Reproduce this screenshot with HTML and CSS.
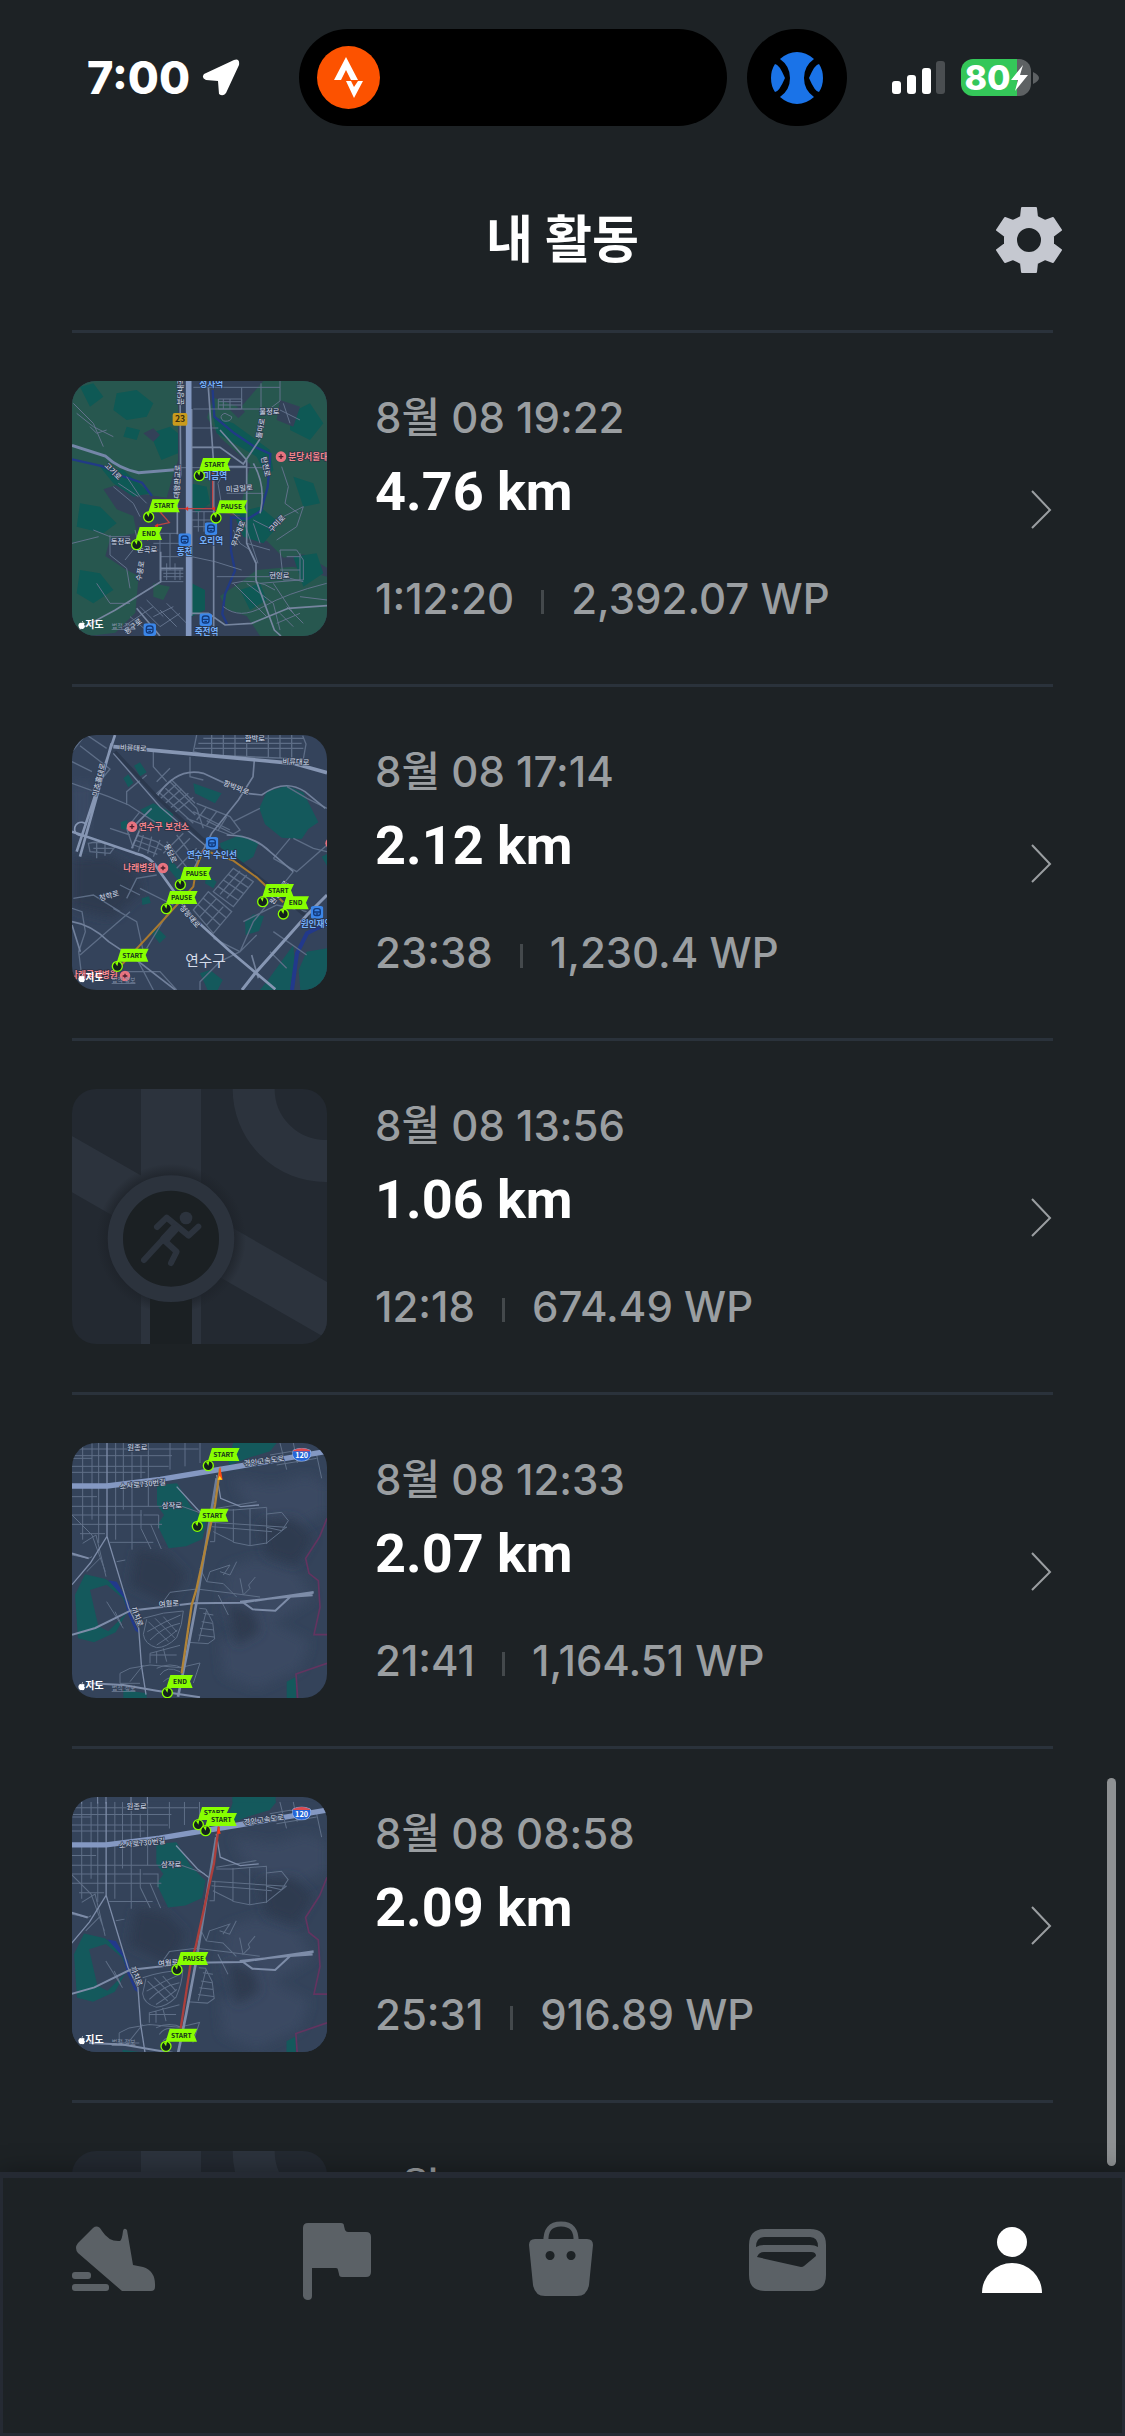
FILE: index.html
```html
<!DOCTYPE html>
<html lang="ko">
<head>
    <meta charset="utf-8">
    <meta name="viewport" content="width=device-width, initial-scale=1">
    <title>내 활동</title>
    <link rel="stylesheet" href="styles.css">
</head>
<body>

<!-- shared drawings -->
<svg class="defs" aria-hidden="true">
    <defs>
        <radialGradient id="ringShadow" gradientUnits="userSpaceOnUse" cx="333" cy="476" r="225">
            <stop offset="0.8" stop-color="#1e232a"/>
            <stop offset="1" stop-color="#1e232a" stop-opacity="0"/>
        </radialGradient>
        <filter id="relief"><feGaussianBlur stdDeviation="16"/></filter>
        <symbol id="pinWide" viewBox="-20 -60 120 80" overflow="visible">
            <path d="M11-53h83l-9 19 8 20H7l-4 8-6-2z" fill="#8f0"/>
            <circle r="15" fill="#14221c" stroke="#8f0" stroke-width="4"/>
            <path d="M0 0L-7-11A13 13 0 0 1 3-13z" fill="#8f0"/>
        </symbol>
        <symbol id="pinNarrow" viewBox="-20 -60 120 80" overflow="visible">
            <path d="M9-53h68l-9 19 8 20H5l-4 8-6-2z" fill="#8f0"/>
            <circle r="15" fill="#14221c" stroke="#8f0" stroke-width="4"/>
            <path d="M0 0L-7-11A13 13 0 0 1 3-13z" fill="#8f0"/>
        </symbol>
        <symbol id="station" viewBox="0 0 38 38">
            <rect width="38" height="38" rx="8" fill="#3b86e8"/>
            <rect x="9" y="8" width="20" height="21" rx="7" fill="none" stroke="#123a7c" stroke-width="4"/>
            <path d="M10 18h18M15 24h8" stroke="#123a7c" stroke-width="4"/>
        </symbol>
        <symbol id="hospital" viewBox="0 0 34 34">
            <circle cx="17" cy="17" r="16" fill="#e8737f"/>
            <path d="M17 10v14M10 17h14" stroke="#4b1e2c" stroke-width="4"/>
        </symbol>
        <symbol id="apple" viewBox="0 0 22 26">
            <path d="M11 7Q16 4 20 8Q16 13 21 17Q18 26 14 25Q11 23 8 25Q1 22 1 14Q2 4 11 7zM11 6Q11 1 15 0Q15 5 11 6z" fill="#fff"/>
        </symbol>
        <symbol id="shield120" viewBox="0 0 56 42">
            <path d="M2 8Q28-4 54 8Q60 26 46 36Q28 46 10 36Q-4 26 2 8z" fill="#2566d8" stroke="#b9cdf2" stroke-width="2"/>
            <path d="M3 8Q28-4 53 8v3H3z" fill="#dc4a4f"/>
            <text x="28" y="32" class="shield">120</text>
        </symbol>
        <symbol id="noMap" viewBox="36 27 765 765">
            <rect x="36" y="27" width="765" height="765" fill="#232931"/>
            <path d="M243 27h180v765H243zM36 168l765 438v170L36 337z" fill="#2c333d"/>
            <circle cx="797" cy="27" r="216" fill="none" stroke="#2c333d" stroke-width="126"/>
            <circle cx="333" cy="476" r="225" fill="url(#ringShadow)"/>
            <path d="M270 640h126v152H270z" fill="#1b2023"/>
            <circle cx="333" cy="476" r="167" fill="#1b2023" stroke="#2c333d" stroke-width="46"/>
            <g fill="none" stroke="#2c333d" stroke-width="18" stroke-linecap="round" stroke-linejoin="round">
                <path d="M291 441l29-28 66 54 29-27"/>
                <path d="M343 441l-91 99M340 446l-22 40 32 29-17 34"/>
                <path d="M344 446l-30 32" stroke-width="28"/>
            </g>
            <circle cx="378" cy="414" r="19" fill="#2c333d"/>
        </symbol>
        <!-- the same district is shown by two activities -->
        <symbol id="district" viewBox="36 24 765 765">
            <rect x="36" y="24" width="765" height="765" fill="#34435a"/>
            <g fill="#3b4a62" filter="url(#relief)">
                <path d="M520 130l120 20 100-30 61 30v80l-120 60-130-90z"/>
                <path d="M500 400l90-30 120 40 50 80-180 110-100-60z"/>
                <path d="M480 620l150-60 120 60-30 80-130 60-100-40z"/>
            </g>
            <g fill="#2e3b50" filter="url(#relief)">
                <path d="M230 340l90 20 60 60-50 90-120-60z"/>
                <path d="M600 260l100-10 60 60-50 80-90-30z"/>
                <path d="M500 500l80 30 20 60-70 40z"/>
            </g>
            <g fill="#14595c">
                <path d="M291 150l60-5 42 70 45 45-10 52-50 22-52 6-34-70 20-30-21-30z"/>
                <path d="M45 480l30-62 62 14 40 30 30 60-40 70-65 30-48-12z"/>
                <path d="M520 24h130l-20 25-60 18-62 24-4-20z"/>
                <path d="M680 740l28-15v64h-28zM190 765l70 10v14h-70z"/>
            </g>
            <path d="M90 465l50-16 48 40 17 40-60 60-30-15z" fill="#34435a"/>
            <path d="M145 436l25 4 36 60 10 45 22 50-12-8-22-50-12-48z" fill="#22398b"/>
            <g fill="none" stroke="#5f6f87" stroke-width="3">
                <path d="M68 24v290M96 24v230M116 24v300M167 24v290M190 24v200M216 24v320M243 60v70M265 24v190M330 24v80M375 24v70M420 24v60"/>
                <path d="M36 42h380M36 62h300M36 94h290M36 112h220M36 185h75M36 214h330l70 25M36 240h210M36 268h270M60 296h75M150 322h130M36 70h60"/>
                <path d="M243 225v55l30 62M272 268l32 74M250 240h46v40M68 325l40-25 30 125M80 410l40-40M36 240l60 60 40 110"/>
                <path d="M470 220l120-20M470 225h50l100-8v60l45 10 20-30-20-25-45 5M520 222v100l50 10 50-8 60-48M570 222v108M456 262l225 15M456 275l180 15M460 290l60 30M620 277v50M450 320h14l2-60"/>
                <path d="M310 500l20-28 80-10 100 12 90 12M420 400l20 40 50 6 40 40M440 440l10-30 60-20-20 30M480 410l30 10 20-40M540 430l10 50 20-20-4-10 20-24M475 480l30 60"/>
                <path d="M250 550q60-20 120-22-2 40-20 80-30 30-60 30-36-10-40-40l10-45M265 560l60 60M285 550l60 60M310 545l40 45M262 590q50-30 100-50M270 615q40-40 90-50M290 630q40-25 62-45"/>
                <path d="M418 520l20 2 20 40 6 50-20 14-60-4M430 535l30 5M425 560l32 5M420 580l42 5M416 600l46 6M440 524l-24 95"/>
                <path d="M270 685v-30l90-24M270 660h80M290 650v35M310 640l10 40M180 715l30-15 60-10 90 8 60-14-20 60M290 700q40-20 80 0M300 720q20-30 60-10M310 740q20-20 50-10M180 715v30h60M250 690l-40 50"/>
                <path d="M36 360l50 10 10-5M140 500l50 80M165 530l20 40M170 380l26-5M630 60l60-10 80 10 15 70M650 90l120-20M660 24l20 80M700 24l12 60"/>
            </g>
            <g fill="none" stroke="#7d8ca8" stroke-width="6">
                <path d="M141 24v280l-50 80-55 65M141 304l65 215 30 60 8 110 14 90M350 155l64 70 40 30M470 120l12 70 60 25 55-5" stroke-width="4"/>
                <path d="M36 599l70-20 105-52 190-22 145-2 215-32M550 503l28 20 68 4 45-42 70-12M36 355l50 15M540 500l140-14 78-5"/>
                <path d="M410 500l-30 160-26 125" stroke-width="8"/>
                <path d="M90 745l100 5 100 17 130 20"/>
            </g>
            <path d="M36 153h105l160-20 240-40 260-44" fill="none" stroke="#8498c2" stroke-width="16"/>
            <path d="M470 130L410 500" stroke="#6f7e98" stroke-width="8"/>
            <path d="M801 250l-22 55-42 65 10 45 28 22 5 80-18 82h39M801 685l-93 32 5 72" fill="none" stroke="#633460" stroke-width="5"/>
            <g class="road">
                <text x="202" y="46">원종로</text>
                <text x="305" y="220">삼작로</text>
                <text x="297" y="516" transform="rotate(-4 297 516)">여월로</text>
                <text x="180" y="163" transform="rotate(-6 180 163)">소사로730번길</text>
                <text x="553" y="94" transform="rotate(-8 553 94)">경인고속도로</text>
                <text x="213" y="520" transform="rotate(68 213 520)">까치로</text>
            </g>
            <use href="#shield120" x="697" y="38" width="56" height="42"/>
        </symbol>
    </defs>
</svg>

<div class="status-bar">
    <div class="clock">
        <span>7:00</span>
        <svg width="38" height="38" viewBox="0 0 38 38"><path d="M32 1Q38-1 37 6L24 34Q21 38 17 35L16 22L4 21Q-1 19 2 15z" fill="#fff"/></svg>
    </div>
    <div class="island">
        <svg width="63" height="63" viewBox="0 0 63 63">
            <circle cx="31.500" cy="31.500" r="31.500" fill="#fc5200"/>
            <path d="M17 34L29 11L41 34H34L29 24L24 34z" fill="#fff"/>
            <path d="M29 35H34L37 41L41 35H46L37 52z" fill="#fff"/>
        </svg>
    </div>
    <div class="island-dot">
        <svg width="54" height="54" viewBox="0 0 54 54">
            <path d="M10 8Q18 1 27 1T44 8Q34 15 34 27T44 46Q36 53 27 53T10 46Q20 39 20 27T10 8z" fill="#1a73e8"/>
            <path d="M5 13Q1 19 1 27T5 41Q9 41 15 27Q9 13 5 13zM49 13Q53 19 53 27T49 41Q45 41 39 27Q45 13 49 13z" fill="#1a73e8"/>
        </svg>
    </div>
    <div class="status-right">
        <svg width="54" height="34" viewBox="0 0 54 34">
            <rect x="0" y="20" width="9" height="13" rx="3" fill="#fff"/>
            <rect x="15" y="14" width="9" height="19" rx="3" fill="#fff"/>
            <rect x="30" y="7" width="9" height="26" rx="3" fill="#fff"/>
            <rect x="44" y="0" width="9" height="33" rx="3" fill="#4a4e51"/>
        </svg>
        <div class="battery">
            <span>80</span>
            <svg width="17" height="26" viewBox="0 0 17 26"><path d="M12 0L0 15H7L4 26L17 10H9z" fill="#fff"/></svg>
        </div>
        <svg class="battery-tip" width="6" height="12" viewBox="0 0 6 12"><path d="M0 0Q6 3 6 6T0 12z" fill="#5d6163"/></svg>
    </div>
</div>

<header class="title-bar">
    <h1>내 활동</h1>
    <button class="settings" type="button" aria-label="설정">
        <svg width="68" height="68" viewBox="-1 -1 68 68">
            <path fill="#c5c8d0" stroke="#c5c8d0" stroke-width="2" stroke-linejoin="round" fill-rule="evenodd" d="M26 1H40L41 10L49 14L57 11L65 23L57 29V37L65 43L57 55L49 52L41 56L40 65H26L25 56L17 52L9 55L1 43L9 37V29L1 23L9 11L17 14L25 10zM33 20a13 13 0 1 0 0 26a13 13 0 1 0 0-26z"/>
        </svg>
    </button>
</header>

<main class="activities">
    <a class="activity" href="#">
        <svg class="thumb" viewBox="36 33 765 765">
            <rect x="36" y="33" width="765" height="765" fill="#334158"/>
            <g fill="#27574f">
                <path d="M36 33h318v240l-14 40-20 70-70-10-60-35-60 20 40 60 50 20 10 50-80 20-14 50 60 40 40 20-10 110-60 60-80 10H36z"/>
                <path d="M610 33h191v560l-70-40-60 10-50-50-60-10-30-60 20-70 20-90-90-80-40-60 20-60 80 30z"/>
                <path d="M590 600l110-10 101 30v178H600l-40-60-60-20-20-40 60-40z"/>
                <path d="M400 300l50 10v100h-50zM280 640l50 10-20 40-30-10z"/>
            </g>
            <g fill="#0e5955">
                <path d="M170 70l60-10 50 40-20 40-60 10-40-30zM60 50l40-10 30 40-40 30zM60 400l60 10 50 50-40 30-80-20zM460 140l60 20 110 80 10 60-20 20-30-60-120-70z"/>
                <path d="M60 600l60 10 40 50-60 40-50-30zM690 130l60-30 40 60-40 50-60-30zM700 560l70-10 20 60-60 40zM395 640l40 20v60l-40 20zM390 340l50 10 10 50-40 30-20-30zM120 290l70 10 80 70-50 10-60-40z"/>
                <path d="M520 430l80-20 60 50-50 60-60-20zM540 660l60-20 20 50-50 30zM270 190l60-20 24 20v60l-50 20zM200 170l40 10-10 30-40-10zM700 320l60 20 20 60-50 10z"/>
            </g>
            <path d="M250 190l30-15 20 20-20 20zM510 120l30-10 15 15-20 20zM660 90l60 20-20 60-50-20z" fill="#334158"/>
            <path d="M458 60l5 80 60 50 60 40 48 22-8 100-20 70-40 25-50-5v100l12 60-30 70-8 60 14 30M36 268l90 20 60 30 60 20 30 40" fill="none" stroke="#213a86" stroke-width="7"/>
            <g fill="none" stroke="#62728b" stroke-width="3">
                <path d="M400 52h260M400 117h200M395 174h80M475 87h70v30h-70zM490 87v30M510 87v30M545 52v65M603 40v75M660 33v60l-40 30M475 95h70M475 105h70"/>
                <path d="M395 232h60M360 293h250M395 425h70M395 450h70M400 470h50M500 370h110M415 425v60M432 425v60M395 560l70 15 80 25M470 620h200l60 15M600 640l120-10v-80"/>
                <path d="M40 100l60 60 30 70M50 130l50 40 60 30M90 170l20 20 30-10M150 495v60l50 40 10 60M245 480v60M300 490v140M330 490v110M245 490h110M280 520h80M300 560h65M245 540h50M300 600h70M310 620h60M320 580v50M345 580v50M360 600v30M310 610h60M300 635h70"/>
                <path d="M160 350l60 50 20 40M175 340l60 40M200 320l40 60 20 20M225 480l10 40-40 50M100 480l50 20h60M36 520l80-20"/>
                <path d="M520 480l20 40 30 20 20 40M560 520l70 20M580 450l60 30 30-40 60-30-20 60-60 40M665 290l20 60-10 50 40 30M600 520l-20-60M660 540h50l20 30v60h-60zM680 560h40M660 600h60"/>
                <path d="M240 710l60 60 60-40M260 690l50 50M300 720l50 50M280 740l60-30M320 700l60 60M210 740l60 50M190 770l90-60M560 640l80 60 20 80M640 640l60 90M520 640l100 100M660 730l40 40M680 710l50 50M650 760l70-30M660 120l60 30M670 100l20 60"/>
                <path d="M110 640l40 60h60M720 680l81 10M490 710q50 40 120 0t190-70M515 640q70-20 130 20M494 300l-20 40 10 60 70 60 40 120M495 130a16 12 0 1 0 20 10z"/>
            </g>
            <g fill="none" stroke="#76859f" stroke-width="5">
                <path d="M445 52l16 230v516M360 33l2 280-10 60v120M395 117v620M480 180l80 90v250l28 60v50l55 150 20 18M395 232h85l70 50 50-75M560 290h-70M36 790l130-70 136-85v-90M395 730h50l50 35 80-5 110-45 116-8M300 595h70M600 430q20-80-20-150M230 715l70 83"/>
            </g>
            <path d="M36 226l100 32q40 38 100 50l126-10" fill="none" stroke="#7486a8" stroke-width="9"/>
            <path d="M386 33v765" stroke="#8297bf" stroke-width="17"/>
            <path d="M458 300v116H355l-55 10 28 32-38 8-28 45" fill="none" stroke="#b94444" stroke-width="4"/>
            <path d="M374 416l10-6v12zM455 416l10-6v12zM284 467l10-6v12zM460 420l80 18" fill="#f32c1e" stroke="#b94444"/>
            <use href="#station" x="434" y="457" width="38" height="38"/>
            <use href="#station" x="355" y="490" width="38" height="38"/>
            <use href="#station" x="418" y="730" width="38" height="38"/>
            <use href="#station" x="250" y="760" width="38" height="38"/>
            <use href="#hospital" x="646" y="243" width="34" height="34"/>
            <rect x="338" y="129" width="44" height="38" rx="6" fill="#c99a1e"/>
            <text x="360" y="157" class="route">23</text>
            <g class="place">
                <text x="418" y="52">정자역</text>
                <text x="430" y="327">미금역</text>
                <text x="418" y="522">오리역</text>
                <text x="350" y="555">동천</text>
                <text x="404" y="794">죽전역</text>
            </g>
            <text x="685" y="269" class="clinic">분당서울대</text>
            <g class="road">
                <text x="598" y="132">불정로</text>
                <text x="498" y="366" transform="rotate(-4 498 366)">미금일로</text>
                <text x="628" y="625">현암로</text>
                <text x="152" y="522">동천로</text>
                <text x="231" y="547">손곡로</text>
                <text x="132" y="288" transform="rotate(45 132 288)">고기로</text>
                <text x="604" y="206" transform="rotate(-80 604 206)">돌마로</text>
                <text x="603" y="262" transform="rotate(78 603 262)">탄천로</text>
                <text x="635" y="488" transform="rotate(-46 635 488)">구미로</text>
                <text x="528" y="532" transform="rotate(-70 528 532)">무지개로</text>
                <text x="358" y="385" transform="rotate(-88 358 385)">대왕판교로</text>
                <text x="370" y="105" transform="rotate(-90 370 105)">분당내곡</text>
                <text x="243" y="634" transform="rotate(-80 243 634)">수풍로</text>
                <text x="200" y="794" transform="rotate(-38 200 794)">용구로</text>
            </g>
            <use href="#pinWide" x="398" y="257" width="120" height="80"/>
            <text x="464" y="291" class="flag">START</text>
            <use href="#pinWide" x="246" y="381" width="120" height="80"/>
            <text x="312" y="415" class="flag">START</text>
            <use href="#pinWide" x="448" y="384" width="120" height="80"/>
            <text x="514" y="418" class="flag">PAUSE</text>
            <use href="#pinNarrow" x="210" y="464" width="120" height="80"/>
            <text x="267" y="498" class="flag">END</text>
            <use href="#apple" x="54" y="752" width="22" height="26"/>
            <text x="76" y="774" class="maker">지도</text>
            <text x="155" y="774" class="legal">법적 정보</text>
        </svg>
        <div class="info">
            <p class="date">8월 08 19:22</p>
            <p class="distance">4.76 km</p>
            <p class="stats"><span>1:12:20</span><span>2,392.07 WP</span></p>
        </div>
        <svg class="chevron" viewBox="0 0 22 40"><path d="M1 2L19 21L1 39"/></svg>
    </a>

    <a class="activity" href="#">
        <svg class="thumb" viewBox="36 30 765 765">
            <rect x="36" y="30" width="765" height="765" fill="#34435b"/>
            <path d="M36 400l110-10 80 50 20 60-90 80-120-30z" fill="#2d3a4f" filter="url(#relief)"/>
            <path d="M36 180l60-10v110l-20 50-40 10z" fill="#3a4a64" filter="url(#relief)"/>
            <g fill="#14595c">
                <path d="M598 250l22-50 60-18 50 20 30 60 15 30-30 20-20 30-60-4-50-40z"/>
                <path d="M480 355l60-25 55 25-15 40-35 22-60-35zM400 175l85 30-20 30-60-30zM240 255l40-20 60 30-10 50-50-20zM222 122l18-10 20 30-20 12zM190 160l15-12 15 25-15 14z"/>
                <path d="M740 680l61-10v90l-30 35h-50l-5-60zM330 400l50 60-15 20-40-50zM440 450l30 20-10 20-25-15zM555 590l25-22 32 5-15 45-40 12zM420 745l30-10 38 30-15 30h-30zM275 625l18-15 26 25-20 20zM245 520l22-6 5 20-25 6zM182 292l20-8v30l-18-2zM785 395l16-8v35z"/>
                <path d="M700 660l-80 110-20 25h90l14-90z"/>
            </g>
            <path d="M801 595l-60 30-30 60-15 110" fill="none" stroke="#22398b" stroke-width="12"/>
            <g fill="none" stroke="#5d6d86" stroke-width="4">
                <path d="M36 175l110 40 60 25 100 65M60 62l90 70-50 60M36 80l40-50M80 30l60 40M36 110l60 30M280 75v50l40 45M390 95v60l40 10M330 130l-40 40M240 260l-40 50 20 60M200 240v-40l60-50M150 310l60 20"/>
                <path d="M410 30l-10 50 40 10 290 12 8-45-10-25M430 40h300M415 55h310M405 70h325M455 30v65M490 30v65M525 30v65M560 30v65M625 30v70M660 30v70M695 30v70"/>
                <path d="M285 210l50-45 70 70M300 222l50-45M315 236l50-45M330 250l55-45M345 262l55-45M330 170l80 80 20 60M316 190l90 80M300 205l100 90M410 235l100 40 30 40-20 12-80-40M400 260l110 55M380 280l130 50M440 245l-30 40M470 260l-30 40M500 275l-25 40"/>
                <path d="M230 330l60 20 30 20M225 345l80 30M222 360l70 28M250 330l-15 50M275 335l-12 50M300 345l-20 50M350 330l60 80M320 350l70 90M310 385l60-60M330 400l60-60M350 430l60-60"/>
                <path d="M460 500l60-70 60 40-60 75zM475 485l58 40M490 465l60 40M505 448l60 40M500 520l60-70M480 508l60-70M400 555l45-55 70 60-55 65zM415 540l65 60M430 520l70 60M420 575l50-55M440 600l50-55"/>
                <path d="M36 550l30 10 10 60-20 60 10 80M60 690l150-130M160 550l70 40 20 90M180 560l-80-50-60 10M340 540l-100-50M320 570l-60 100M460 640l80 40 50-50M700 440l-120 150-40 90-60 30 -60 60v30M550 590l100-50 90 20M801 250l-60-30-60-35M690 340l-50 60M640 400l70 40 91-80M700 340l60 30 41 10M600 250l-80 40M380 440l-20 60M200 740h100l50 55M230 700l50 95"/>
                <path d="M85 355q40-10 80 10l-15 20-60-5zM110 350v50M135 352v40M100 370h60M200 520l30-60 60-10M180 480l60 30M640 620l100 70M630 680l50 50"/>
            </g>
            <g fill="none" stroke="#71809b" stroke-width="5">
                <path d="M583 105l-4 50-44 70-80 100-65 130M290 215q60-90 140-70l130 60 45 5q70-50 130-10l61 50M250 290l-35 80M275 250l-60 60M500 330q80 0 130 50l70 60M36 590q60 10 110 60l90 60 110 85M595 760l-20-70M36 600l25 80"/>
                <path d="M165 80l130 140 130 120 100 60 100 80 120 100" stroke="#2b384d" stroke-width="10"/>
                <path d="M160 85l140 160 140 120" stroke-width="4"/>
            </g>
            <g fill="none" stroke="#8696b3" stroke-width="9">
                <path d="M165 30L50 380M155 55L60 395M36 320l190 65q50 10 70 50l100 140 110 100 140 118" stroke-width="8"/>
                <path d="M160 65l430 40 110 10 101 28" stroke-width="11"/>
                <path d="M801 510l-60 60-160 180-35 45"/>
                <path d="M80 300a20 20 0 1 0-8 30" stroke-width="5"/>
            </g>
            <path d="M430 375l-20 50-10 60-90 100-130 140M430 375l90 32 70 50 80 75" fill="none" stroke="#a9792f" stroke-width="6"/>
            <use href="#station" x="437" y="336" width="38" height="38"/>
            <use href="#station" x="752" y="543" width="38" height="38"/>
            <use href="#hospital" x="199" y="288" width="34" height="34"/>
            <use href="#hospital" x="292" y="412" width="34" height="34"/>
            <use href="#hospital" x="178" y="736" width="34" height="34"/>
            <use href="#hospital" x="795" y="338" width="34" height="34"/>
            <g class="place">
                <text x="380" y="400">연수역 수인선</text>
                <text x="722" y="607">원인재역</text>
            </g>
            <g class="clinic">
                <text x="236" y="314">연수구 보건소</text>
                <text x="190" y="439">나래병원</text>
                <text x="30" y="760">나래국제병원</text>
            </g>
            <g class="road">
                <text x="179" y="75" transform="rotate(3 179 75)">비류대로</text>
                <text x="667" y="116" transform="rotate(3 667 116)">비류대로</text>
                <text x="554" y="49">함박로</text>
                <text x="488" y="180" transform="rotate(22 488 180)">함박뫼로</text>
                <text x="112" y="215" transform="rotate(-76 112 215)">미추홀대로</text>
                <text x="312" y="360" transform="rotate(66 312 360)">용담로</text>
                <text x="358" y="548" transform="rotate(50 358 548)">청능대로</text>
                <text x="120" y="528" transform="rotate(-16 120 528)">청학로</text>
                <text x="640" y="540" transform="rotate(-55 640 540)">원인재로</text>
            </g>
            <text x="376" y="722" class="town">연수구</text>
            <use href="#pinWide" x="341" y="419" width="120" height="80"/>
            <text x="409" y="453" class="flag">PAUSE</text>
            <use href="#pinWide" x="299" y="491" width="120" height="80"/>
            <text x="365" y="525" class="flag">PAUSE</text>
            <use href="#pinWide" x="588" y="470" width="120" height="80"/>
            <text x="655" y="504" class="flag">START</text>
            <use href="#pinNarrow" x="650" y="507" width="120" height="80"/>
            <text x="707" y="541" class="flag">END</text>
            <use href="#pinWide" x="152" y="664" width="120" height="80"/>
            <text x="218" y="698" class="flag">START</text>
            <use href="#apple" x="54" y="747" width="22" height="26"/>
            <text x="76" y="769" class="maker">지도</text>
            <text x="155" y="771" class="legal">법적 정보</text>
        </svg>
        <div class="info">
            <p class="date">8월 08 17:14</p>
            <p class="distance">2.12 km</p>
            <p class="stats"><span>23:38</span><span>1,230.4 WP</span></p>
        </div>
        <svg class="chevron" viewBox="0 0 22 40"><path d="M1 2L19 21L1 39"/></svg>
    </a>

    <a class="activity" href="#">
        <svg class="thumb" viewBox="0 0 255 255"><use href="#noMap" width="255" height="255"/></svg>
        <div class="info">
            <p class="date">8월 08 13:56</p>
            <p class="distance">1.06 km</p>
            <p class="stats"><span>12:18</span><span>674.49 WP</span></p>
        </div>
        <svg class="chevron" viewBox="0 0 22 40"><path d="M1 2L19 21L1 39"/></svg>
    </a>

    <a class="activity" href="#">
        <svg class="thumb" viewBox="36 24 765 765">
            <use href="#district" x="36" y="24" width="765" height="765"/>
            <path d="M480 100l-15 110-55 250-15 50-30 205" fill="none" stroke="#b08337" stroke-width="7"/>
            <path d="M480 92l8 42h-14z" fill="#ff4b14"/>
            <path d="M473 134l6-12 8 12z" fill="#ffd21e"/>
            <use href="#pinWide" x="425" y="32" width="120" height="80"/>
            <text x="491" y="66" class="flag">START</text>
            <use href="#pinWide" x="392" y="214" width="120" height="80"/>
            <text x="458" y="248" class="flag">START</text>
            <use href="#pinNarrow" x="302" y="713" width="120" height="80"/>
            <text x="360" y="747" class="flag">END</text>
            <use href="#apple" x="54" y="741" width="22" height="26"/>
            <text x="76" y="763" class="maker">지도</text>
            <text x="155" y="765" class="legal">법적 정보</text>
        </svg>
        <div class="info">
            <p class="date">8월 08 12:33</p>
            <p class="distance">2.07 km</p>
            <p class="stats"><span>21:41</span><span>1,164.51 WP</span></p>
        </div>
        <svg class="chevron" viewBox="0 0 22 40"><path d="M1 2L19 21L1 39"/></svg>
    </a>

    <a class="activity" href="#">
        <svg class="thumb" viewBox="36 21 765 765">
            <rect x="36" y="21" width="765" height="765" fill="#34435a"/>
            <use href="#district" x="33" y="35" width="768" height="768"/>
            <path d="M138 21v20M65 21v20M113 21v20M213 21v20M262 21v20" stroke="#7d8ca8" stroke-width="3"/>
            <path d="M517 21h130v16H517z" fill="#14595c"/>
            <path d="M476 110l-14 110-55 250-15 50-30 195" fill="none" stroke="#ab3f3c" stroke-width="7"/>
            <path d="M476 105l6 26h-10z" fill="#ff3a14"/>
            <use href="#pinWide" x="395" y="44" width="120" height="80"/>
            <text x="462" y="76" class="flag">START</text>
            <use href="#pinWide" x="417" y="62" width="120" height="80"/>
            <text x="484" y="96" class="flag">START</text>
            <use href="#pinWide" x="331" y="479" width="120" height="80"/>
            <text x="400" y="513" class="flag">PAUSE</text>
            <use href="#pinWide" x="298" y="709" width="120" height="80"/>
            <text x="364" y="743" class="flag">START</text>
            <use href="#apple" x="54" y="738" width="22" height="26"/>
            <text x="76" y="760" class="maker">지도</text>
            <text x="155" y="762" class="legal">법적 정보</text>
        </svg>
        <div class="info">
            <p class="date">8월 08 08:58</p>
            <p class="distance">2.09 km</p>
            <p class="stats"><span>25:31</span><span>916.89 WP</span></p>
        </div>
        <svg class="chevron" viewBox="0 0 22 40"><path d="M1 2L19 21L1 39"/></svg>
    </a>

    <a class="activity" href="#">
        <svg class="thumb" viewBox="0 0 255 255"><use href="#noMap" width="255" height="255"/></svg>
        <div class="info">
            <p class="date">8월 08</p>
        </div>
    </a>

    <div class="scrollbar"></div>
</main>

<nav class="tabs">
    <a href="#" aria-label="운동">
        <svg viewBox="0 0 90 90">
            <path d="M23 14Q28 10 32 17Q39 28 50 27Q52 26 53 17Q54 13 57 16L63 51L73 53Q86 57 85 73Q85 77 81 77H52L8 39Q4 34 8 29z"/>
            <rect x="2" y="58" width="19" height="7" rx="3"/>
            <rect x="2" y="70" width="37" height="7" rx="3"/>
        </svg>
    </a>
    <a href="#" aria-label="챌린지">
        <svg viewBox="0 0 90 90">
            <path d="M9 14Q9 9 14 9H47Q50 9 50 12L51 16Q52 18 54 18H72Q77 18 77 23V58Q77 63 72 63H48Q45 63 45 60L44 56Q44 54 42 54H18V82Q18 86 14 86T9 82z"/>
        </svg>
    </a>
    <a href="#" aria-label="상점">
        <svg viewBox="0 0 90 90">
            <path d="M29 28Q28 10 44 10T59 28" fill="none" stroke="#5b6166" stroke-width="5"/>
            <path fill-rule="evenodd" d="M18 25H70Q76 25 76 31L72 71Q70 82 60 82H28Q18 82 16 71L12 31Q12 25 18 25zM33 37a4.500 4.500 0 1 0 .1 0zM54 37a4.500 4.500 0 1 0 .1 0z"/>
        </svg>
    </a>
    <a href="#" aria-label="지갑">
        <svg viewBox="0 0 90 90">
            <path fill-rule="evenodd" d="M24 15H69Q85 15 85 31V61Q85 77 69 77H24Q8 77 8 61V31Q8 15 24 15zM15 33Q15 23 24 23H69Q77 23 77 33Q74 31 69 31H23Q18 31 15 33zM16 43Q18 38 23 38H70Q75 38 75 42L63 52Q62 53 60 53z"/>
        </svg>
    </a>
    <a class="current" href="#" aria-label="내 활동">
        <svg viewBox="0 0 90 90">
            <circle cx="47" cy="28" r="15"/>
            <path d="M17 79a30 30 0 0 1 60 0z"/>
        </svg>
    </a>
</nav>

</body>
</html>
```

FILE: styles.css
```css
* {
    box-sizing: border-box;
}

body {
    margin: 0;
    height: 100vh;
    display: flex;
    flex-direction: column;
    overflow: hidden;
    background-color: #1d2225;
    color: #fff;
    font-family: Inter, "Noto Sans CJK KR", sans-serif;
}

svg {
    display: block;
    flex: none;
}

.defs {
    position: absolute;
    width: 0;
    height: 0;
}

/* status bar */
.status-bar {
    display: flex;
    align-items: center;
    padding: 29px 86px 0 87px;
}

.clock {
    flex: 0 0 212px;
    display: flex;
    align-items: center;
    gap: 12px;
    font-size: 45px;
    font-weight: 800;
    line-height: 54px;
}

.island,
.island-dot {
    display: flex;
    align-items: center;
    height: 97px;
    border-radius: 49px;
    background-color: #000;
}

.island {
    width: 428px;
    padding-left: 18px;
    margin-right: 20px;
}

.island-dot {
    width: 100px;
    justify-content: center;
}

.status-right {
    display: flex;
    align-items: center;
    margin-left: auto;
}

.battery {
    display: flex;
    align-items: center;
    justify-content: center;
    width: 70px;
    height: 37px;
    margin: 0 2px 0 15px;
    border-radius: 12px;
    background: linear-gradient(to right, #34c759 80%, #5d6163 80%);
    font-size: 34px;
    font-weight: 800;
    line-height: 37px;
}

/* title */
.title-bar {
    display: grid;
    grid-template-columns: 1fr auto 1fr;
    align-items: center;
    height: 204px;
    padding: 24px 62px 0;
}

.title-bar h1 {
    grid-column: 2;
    margin: 0;
    font-size: 51px;
    font-weight: 700;
    line-height: 72px;
}

.settings {
    justify-self: end;
    padding: 0;
    border: 0;
    background: none;
}

/* list */
.activities {
    position: relative;
    flex: 1;
    min-height: 0;
    overflow: hidden;
    padding: 0 72px;
}

.activity {
    display: flex;
    align-items: center;
    padding: 48px 0;
    border-top: 3px solid #2a323b;
    color: inherit;
    text-decoration: none;
}

.thumb {
    width: 255px;
    height: 255px;
    border-radius: 24px;
    overflow: hidden;
}

.info {
    flex: 1;
    align-self: stretch;
    padding: 12px 0 0 48px;
    color: #9a9ea1;
    font-size: 42px;
    font-weight: 500;
    line-height: 50px;
}

.info p {
    margin: 0;
}

.info .distance {
    margin: 17px 0 50px;
    color: #fff;
    font-family: Roboto, sans-serif;
    font-size: 54px;
    font-weight: 700;
    line-height: 64px;
}

.stats {
    display: flex;
    align-items: center;
}

.stats span + span::before {
    content: "";
    display: inline-block;
    width: 3px;
    height: 24px;
    margin: 0 27px;
    background-color: #44494c;
}

.chevron {
    width: 22px;
    height: 40px;
    fill: none;
    stroke: #9a9ea1;
    stroke-width: 2;
}

.scrollbar {
    position: absolute;
    right: 9px;
    bottom: 6px;
    width: 9px;
    height: 388px;
    border-radius: 5px;
    background-color: #8e9193;
}

/* map labels */
.thumb text,
.defs text {
    font-family: "Noto Sans CJK KR", sans-serif;
}

.road {
    fill: #c3cbdd;
    font-size: 22px;
    font-weight: 500;
    stroke: #2d3a50;
    stroke-width: 4px;
    paint-order: stroke;
}

.place {
    fill: #76b0fa;
    font-size: 26px;
    font-weight: 700;
    stroke: #24324b;
    stroke-width: 4px;
    paint-order: stroke;
}

.clinic {
    fill: #f2858d;
    font-size: 26px;
    font-weight: 700;
    stroke: #2d3042;
    stroke-width: 4px;
    paint-order: stroke;
}

.town {
    fill: #d5dcea;
    font-size: 44px;
}

.maker {
    fill: #fff;
    font-size: 30px;
    font-weight: 700;
}

.legal {
    fill: #8391a8;
    font-size: 18px;
    text-decoration: underline;
}

.flag {
    fill: #14321c;
    font-size: 20px;
    font-weight: 700;
    text-anchor: middle;
}

.route {
    fill: #3b2f10;
    font-size: 26px;
    font-weight: 700;
    text-anchor: middle;
}

.shield {
    fill: #fff;
    font-size: 22px;
    font-weight: 700;
    text-anchor: middle;
}

/* bottom tabs */
.tabs {
    position: relative;
    display: grid;
    grid-template-columns: repeat(5, 1fr);
    justify-items: center;
    flex: 0 0 264px;
    padding-top: 36px;
    border: 3px solid #252a33;
    border-top-width: 6px;
    background-color: #1d2225;
    box-shadow: 0 0 24px rgba(0, 0, 0, 0.35);
    fill: #5b6166;
}

.tabs svg {
    width: 90px;
    height: 90px;
}

.tabs .current {
    fill: #fff;
}
```
